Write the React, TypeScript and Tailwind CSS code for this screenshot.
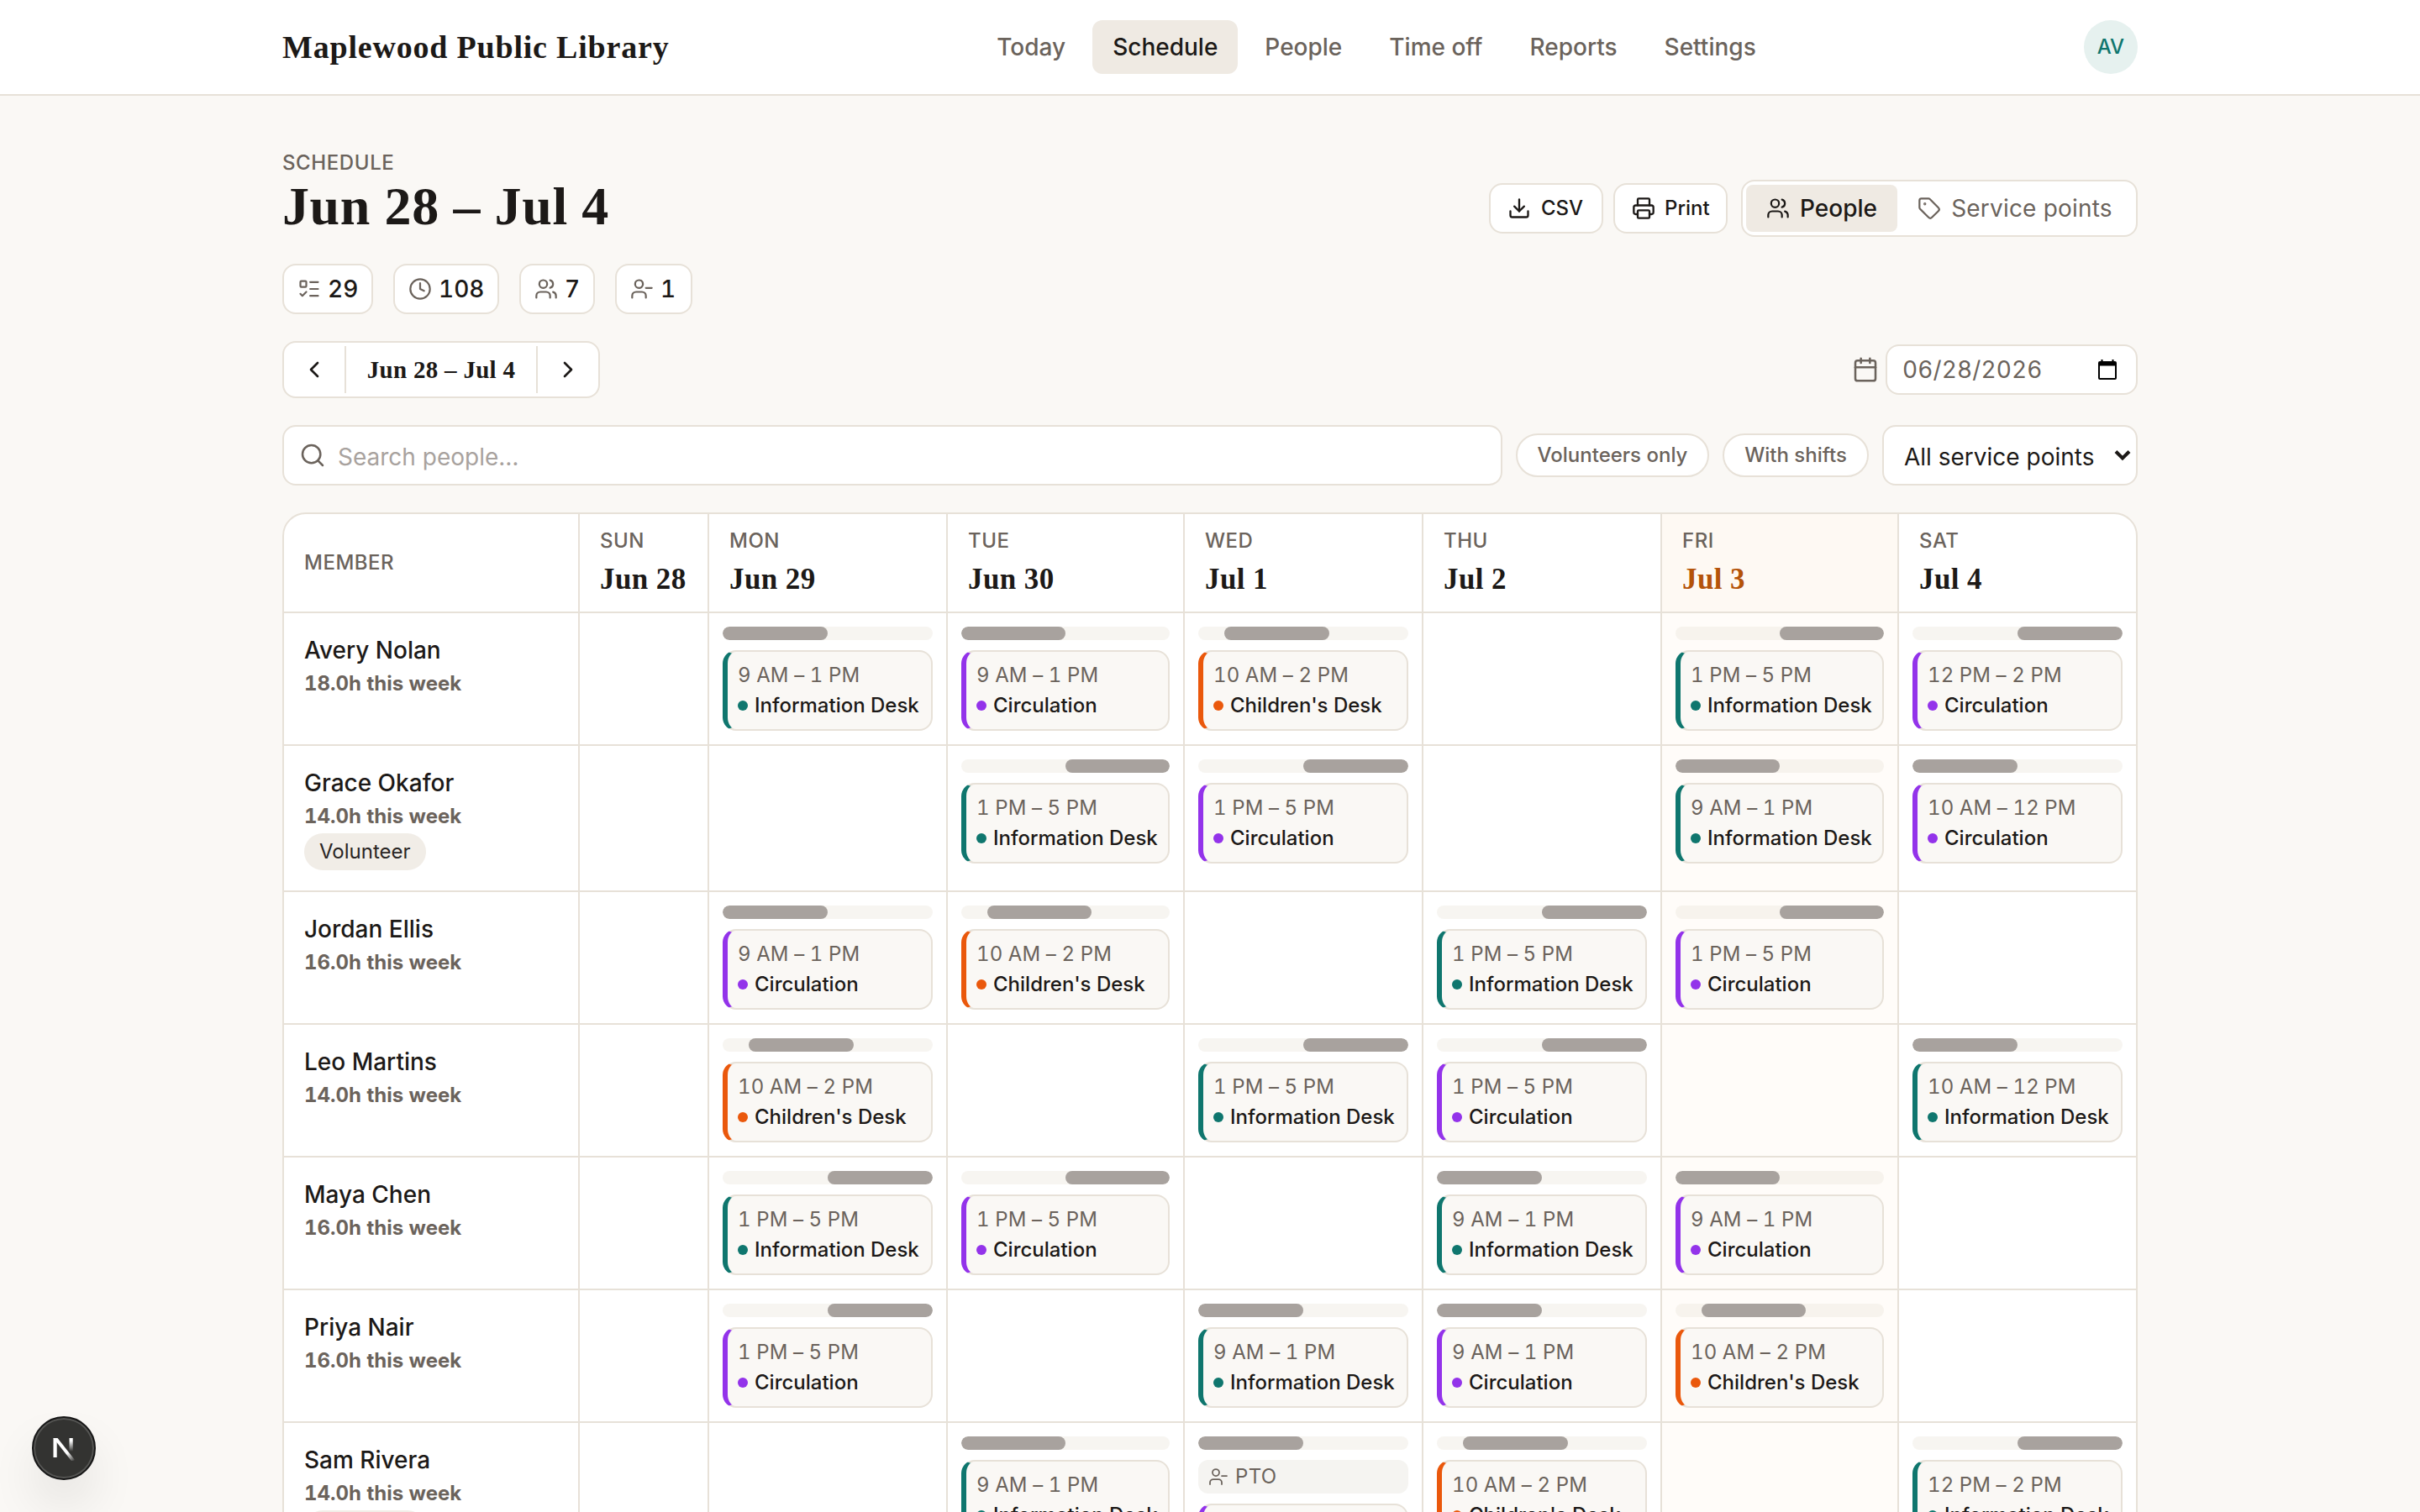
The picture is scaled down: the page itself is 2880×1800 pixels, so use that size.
import React, { useState } from "react";
import {
  Calendar,
  ChevronLeft,
  ChevronRight,
  Clock,
  Download,
  ListTodo,
  Printer,
  Search,
  Tag,
  UserMinus,
  Users,
} from "lucide-react";

type Point = "info" | "circ" | "kids";

interface Shift {
  time: string;
  point: Point;
  start: number; // % of the opening hours
  width: number;
  pto?: boolean;
}

interface Member {
  name: string;
  hours: string;
  volunteer?: boolean;
  shifts: Record<string, Shift>;
}

const POINTS: Record<Point, { label: string; border: string; dot: string }> = {
  info: {
    label: "Information Desk",
    border: "border-l-[#0f766e]",
    dot: "bg-[#0f766e]",
  },
  circ: {
    label: "Circulation",
    border: "border-l-[#9333ea]",
    dot: "bg-[#9333ea]",
  },
  kids: {
    label: "Children's Desk",
    border: "border-l-[#ea580c]",
    dot: "bg-[#ea580c]",
  },
};

const DAYS = [
  { day: "Sun", date: "Jun 28" },
  { day: "Mon", date: "Jun 29" },
  { day: "Tue", date: "Jun 30" },
  { day: "Wed", date: "Jul 1" },
  { day: "Thu", date: "Jul 2" },
  { day: "Fri", date: "Jul 3" },
  { day: "Sat", date: "Jul 4" },
];

const TODAY = "Fri";

const morning = (point: Point): Shift => ({ time: "9 AM – 1 PM", point, start: 0, width: 50 });
const midday = (point: Point): Shift => ({ time: "10 AM – 2 PM", point, start: 12.5, width: 50 });
const afternoon = (point: Point): Shift => ({ time: "1 PM – 5 PM", point, start: 50, width: 50 });
const satEarly = (point: Point): Shift => ({ time: "10 AM – 12 PM", point, start: 0, width: 50 });
const satLate = (point: Point): Shift => ({ time: "12 PM – 2 PM", point, start: 50, width: 50 });

const MEMBERS: Member[] = [
  {
    name: "Avery Nolan",
    hours: "18.0h",
    shifts: {
      Mon: morning("info"),
      Tue: morning("circ"),
      Wed: midday("kids"),
      Fri: afternoon("info"),
      Sat: satLate("circ"),
    },
  },
  {
    name: "Grace Okafor",
    hours: "14.0h",
    volunteer: true,
    shifts: {
      Tue: afternoon("info"),
      Wed: afternoon("circ"),
      Fri: morning("info"),
      Sat: satEarly("circ"),
    },
  },
  {
    name: "Jordan Ellis",
    hours: "16.0h",
    shifts: {
      Mon: morning("circ"),
      Tue: midday("kids"),
      Thu: afternoon("info"),
      Fri: afternoon("circ"),
    },
  },
  {
    name: "Leo Martins",
    hours: "14.0h",
    shifts: {
      Mon: midday("kids"),
      Wed: afternoon("info"),
      Thu: afternoon("circ"),
      Sat: satEarly("info"),
    },
  },
  {
    name: "Maya Chen",
    hours: "16.0h",
    shifts: {
      Mon: afternoon("info"),
      Tue: afternoon("circ"),
      Thu: morning("info"),
      Fri: morning("circ"),
    },
  },
  {
    name: "Priya Nair",
    hours: "16.0h",
    shifts: {
      Mon: afternoon("circ"),
      Wed: morning("info"),
      Thu: morning("circ"),
      Fri: midday("kids"),
    },
  },
  {
    name: "Sam Rivera",
    hours: "14.0h",
    volunteer: true,
    shifts: {
      Tue: morning("info"),
      Wed: { ...morning("circ"), pto: true },
      Thu: midday("kids"),
      Sat: satLate("info"),
    },
  },
];

const NAV = ["Today", "Schedule", "People", "Time off", "Reports", "Settings"];

const STATS = [
  { icon: ListTodo, value: "29", width: "w-[108px]" },
  { icon: Clock, value: "108", width: "w-[126px]" },
  { icon: Users, value: "7", width: "w-[90px]" },
  { icon: UserMinus, value: "1", width: "w-[92px]" },
];

const GRID = "grid grid-cols-[352px_154px_284px_282px_284px_284px_282px_282px]";
const SERIF = "font-['Liberation_Serif',serif] font-bold";

const Navbar: React.FC = () => (
  <header className="bg-white border-b-2 border-[#e7e1d8]">
    <div className="w-[2208px] mx-auto h-28 flex items-center justify-between">
      <span className={`${SERIF} text-[38px] w-[460px] whitespace-nowrap tracking-[0.8px]`}>
        Maplewood Public Library
      </span>
      <nav className="flex gap-2">
        {NAV.map((item) => (
          <a
            key={item}
            className={`h-16 px-6 flex items-center rounded-xl text-[28px] font-medium ${
              item === "Schedule" ? "bg-[#efeae3] text-[#1c1917]" : "text-[#6b635c]"
            }`}
          >
            {item}
          </a>
        ))}
      </nav>
      <span className="size-16 rounded-full bg-[#e6f1ef] text-[#0f766e] text-2xl font-medium flex items-center justify-center">
        AV
      </span>
    </div>
  </header>
);

const ShiftCell: React.FC<{ shift: Shift }> = ({ shift }) => {
  const point = POINTS[shift.point];
  return (
    <div className="flex flex-col gap-3">
      <div className="h-4 rounded-lg bg-[#e7e1d8]/35 overflow-hidden">
        <div
          className="h-full rounded-lg bg-[#a8a29e]"
          style={{ marginLeft: `${shift.start}%`, width: `${shift.width}%` }}
        />
      </div>
      {shift.pto && (
        <div className="h-10 px-3 rounded-xl bg-[#f5f4f1] flex items-center gap-2 text-2xl tracking-[0.3px] text-[#6b635c]">
          <UserMinus size={24} strokeWidth={1.75} />
          PTO
        </div>
      )}
      <div
        className={`h-24 pl-3 pt-2.5 border-2 border-l-[6px] border-[#e7e1d8] ${point.border} rounded-2xl bg-[#faf8f5] text-2xl leading-9 whitespace-nowrap`}
      >
        <div className="text-[#6b635c] tabular-nums tracking-[0.1px]">{shift.time}</div>
        <div className="flex items-center gap-2 font-medium">
          <span className={`size-3 rounded-full ${point.dot}`} />
          {point.label}
        </div>
      </div>
    </div>
  );
};

const ScheduleTable: React.FC = () => (
  <div className="mt-8 border-2 border-[#e7e1d8] rounded-[28px] bg-white overflow-hidden">
    <div className={`${GRID} h-[118px] border-b-2 border-[#e7e1d8]`}>
      <div className="px-6 flex items-center border-r-2 border-[#e7e1d8] text-2xl font-medium tracking-[0.5px] text-[#6b635c]">
        MEMBER
      </div>
      {DAYS.map(({ day, date }) => (
        <div
          key={day}
          className={`px-6 pt-4 border-[#e7e1d8] ${day === "Sat" ? "" : "border-r-2"} ${
            day === TODAY ? "bg-[#fef9f3]" : ""
          }`}
        >
          <div className="text-2xl leading-8 font-medium tracking-[0.5px] uppercase text-[#6b635c]">
            {day}
          </div>
          <div
            className={`${SERIF} mt-1.5 text-[35px] leading-[48px] tracking-[0.4px] whitespace-nowrap ${
              day === TODAY ? "text-[#b45309]" : ""
            }`}
          >
            {date}
          </div>
        </div>
      ))}
    </div>

    {MEMBERS.map((member) => (
      <div
        key={member.name}
        className={`${GRID} border-b-2 border-[#e7e1d8] ${
          member.volunteer ? "min-h-[174px]" : "min-h-[158px]"
        }`}
      >
        <div className="px-6 pt-6 border-r-2 border-[#e7e1d8]">
          <div className="text-[28px] leading-[42px] -mt-px font-medium">{member.name}</div>
          <div className="mt-px text-2xl leading-9 font-bold tabular-nums text-[#6b635c]">
            {member.hours} this week
          </div>
          {member.volunteer && (
            <span className="mt-0.5 h-11 px-[18px] inline-flex items-center rounded-full bg-[#f1ede7] text-2xl text-[#292524]">
              Volunteer
            </span>
          )}
        </div>
        {DAYS.map(({ day }) => (
          <div
            key={day}
            className={`p-4 border-[#e7e1d8] ${day === "Sat" ? "" : "border-r-2"} ${
              day === TODAY ? "bg-[#fffcf9]" : ""
            }`}
          >
            {member.shifts[day] && <ShiftCell shift={member.shifts[day]} />}
          </div>
        ))}
      </div>
    ))}
  </div>
);

const DevBadge: React.FC = () => (
  <div className="fixed left-[38px] top-[1686px] size-[76px] rounded-full bg-[#333331] border-2 border-[#171717] shadow-[inset_0_0_0_2px_#555553,0_32px_64px_-16px_rgba(0,0,0,0.24)] flex items-center justify-center">
    <svg width="28" height="30" viewBox="0 0 28 30" fill="none">
      <defs>
        <linearGradient id="stem" x1="0" y1="0" x2="0" y2="1">
          <stop offset="0.2" stopColor="#fff" />
          <stop offset="1" stopColor="#fff" stopOpacity="0" />
        </linearGradient>
        <linearGradient id="slash" x1="3" y1="3" x2="26" y2="31" gradientUnits="userSpaceOnUse">
          <stop offset="0.65" stopColor="#fff" />
          <stop offset="1" stopColor="#fff" stopOpacity="0" />
        </linearGradient>
      </defs>
      <rect x="1.500" y="3" width="4.200" height="23" fill="#fff" />
      <rect x="20.500" y="3" width="4.200" height="16" fill="url(#stem)" />
      <path d="M1.500 3h5l20.500 26-3.200 2.200z" fill="url(#slash)" />
    </svg>
  </div>
);

const App: React.FC = () => {
  const [view, setView] = useState("people");

  return (
    <div className="h-[1800px] overflow-hidden bg-[#faf8f5] text-[#1c1917] font-['Inter',sans-serif]">
      <Navbar />
      <main className="w-[2208px] mx-auto pt-16">
        {/* Title and view controls */}
        <div className="flex items-end justify-between">
          <div>
            <div className="text-2xl leading-8 font-medium tracking-[0.6px] text-[#6b635c]">
              SCHEDULE
            </div>
            <h1 className={`${SERIF} text-[64px] leading-[72px] tracking-[0.6px]`}>
              Jun 28 – Jul 4
            </h1>
          </div>
          <div className="flex items-center">
            <button className="h-[60px] w-[136px] pl-5 flex items-center gap-3 border-2 border-[#e7e1d8] rounded-2xl bg-white text-2xl font-medium">
              <Download size={28} />
              CSV
            </button>
            <button className="ml-3 h-[60px] w-[136px] pl-5 flex items-center gap-[11px] border-2 border-[#e7e1d8] rounded-2xl bg-white text-2xl font-medium">
              <Printer size={28} />
              Print
            </button>
            <div className="ml-4 w-[472px] flex p-1 border-2 border-[#e7e1d8] rounded-2xl bg-white text-[28px]">
              <button
                onClick={() => setView("people")}
                className={`h-14 w-[180px] flex items-center justify-center gap-3 rounded-lg font-medium ${
                  view === "people" ? "bg-[#efeae3]" : "text-[#6b635c]"
                }`}
              >
                <Users size={28} strokeWidth={1.9} />
                People
              </button>
              <button
                onClick={() => setView("points")}
                className="h-14 flex-1 flex items-center justify-center gap-3 rounded-lg tracking-[0.2px] text-[#6b635c]"
              >
                <Tag size={28} strokeWidth={1.9} />
                Service points
              </button>
            </div>
          </div>
        </div>

        {/* Week totals */}
        <div className="mt-8 flex gap-6">
          {STATS.map(({ icon: Icon, value, width }) => (
            <div
              key={value}
              className={`h-[60px] ${width} pl-4 flex items-center gap-2 border-2 border-[#e7e1d8] rounded-2xl bg-white text-[28px] font-medium tabular-nums`}
            >
              <Icon size={28} strokeWidth={1.9} className="shrink-0 text-[#6b635c]" />
              {value}
            </div>
          ))}
        </div>

        {/* Week picker */}
        <div className="mt-8 flex items-center justify-between">
          <div className="flex p-1 border-2 border-[#e7e1d8] rounded-2xl bg-white">
            <button className="h-14 w-16 mr-1 flex items-center justify-center">
              <ChevronLeft size={32} />
            </button>
            <span
              className={`${SERIF} h-14 w-[230px] pt-px flex items-center justify-center border-x-2 border-[#e7e1d8] text-[29px] tracking-[0.3px] whitespace-nowrap`}
            >
              Jun 28 – Jul 4
            </span>
            <button className="h-14 w-16 ml-1 flex items-center justify-center">
              <ChevronRight size={32} />
            </button>
          </div>
          <div className="flex items-center gap-2 text-[#6b635c]">
            <Calendar size={32} strokeWidth={1.9} />
            <div className="h-[60px] w-[300px] pl-[18px] pr-[23px] flex items-center justify-between border-2 border-[#e7e1d8] rounded-2xl bg-white text-[28px] tabular-nums">
              <span className="tracking-[0.1px]">06/28/2026</span>
              <svg width="22" height="24" viewBox="0 0 22 24" fill="#000">
                <path
                  d="M3.500 0h2v2h11V0h2v2H20a2 2 0 0 1 2 2v18a2 2 0 0 1-2 2H2a2 2 0 0 1-2-2V4a2 2 0 0 1 2-2h1.500V0zM2 7.500V22h18V7.500H2z"
                  fillRule="evenodd"
                />
              </svg>
            </div>
          </div>
        </div>

        {/* Filters */}
        <div className="mt-8 flex items-center gap-4">
          <div className="h-[72px] flex-1 pl-[18px] flex items-center gap-[14px] border-2 border-[#e7e1d8] rounded-2xl bg-white text-[28px] text-[#a8a29e]">
            <Search size={32} strokeWidth={1.9} className="text-[#6b635c]" />
            <span className="pt-1">Search people…</span>
          </div>
          <button className="h-[52px] w-[230px] border-2 border-[#e7e1d8] rounded-full bg-white text-2xl font-medium text-[#6b635c]">
            Volunteers only
          </button>
          <button className="h-[52px] w-[174px] border-2 border-[#e7e1d8] rounded-full bg-white text-2xl font-medium text-[#6b635c]">
            With shifts
          </button>
          <div className="h-[72px] w-[304px] pl-6 pr-[6px] flex items-center justify-between border-2 border-[#e7e1d8] rounded-2xl bg-white text-[28px]">
            <span className="pt-1">All service points</span>
            <svg width="20" height="14" viewBox="0 0 20 14" fill="none">
              <path d="M2 2.500l8 8 8-8" stroke="#1c1917" strokeWidth="4" />
            </svg>
          </div>
        </div>

        <ScheduleTable />
      </main>
      <DevBadge />
    </div>
  );
};

export default App;
